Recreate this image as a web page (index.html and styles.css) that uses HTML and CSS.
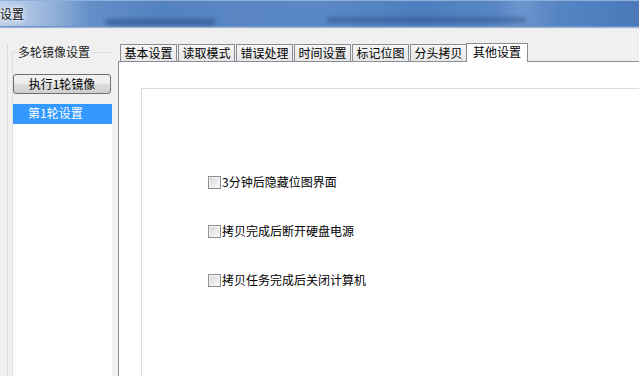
FILE: index.html
```html
<!DOCTYPE html>
<html lang="zh">
<head>
<meta charset="utf-8">
<title>设置</title>
<link rel="stylesheet" href="styles.css">
</head>
<body>
<div class="window">
  <div class="titlebar">
    <span class="title">设置</span>
    <span class="blur blur-a"></span>
    <span class="blur blur-b"></span>
  </div>
  <div class="main">
    <div class="left">
      <div class="group">
        <div class="legend">多轮镜像设置</div>
        <button class="btn">执行1轮镜像</button>
        <ul class="list">
          <li class="item selected">第1轮设置</li>
        </ul>
      </div>
    </div>
    <div class="tabs">
      <div class="tabstrip">
        <div class="tab">基本设置</div>
        <div class="tab">读取模式</div>
        <div class="tab">错误处理</div>
        <div class="tab">时间设置</div>
        <div class="tab">标记位图</div>
        <div class="tab">分头拷贝</div>
        <div class="tab active">其他设置</div>
      </div>
      <div class="page">
        <div class="panel">
          <label class="check"><span class="box"></span><span class="label">3分钟后隐藏位图界面</span></label>
          <label class="check"><span class="box"></span><span class="label">拷贝完成后断开硬盘电源</span></label>
          <label class="check"><span class="box"></span><span class="label">拷贝任务完成后关闭计算机</span></label>
        </div>
      </div>
    </div>
  </div>
</div>
</body>
</html>
```
FILE: styles.css
```css
* { box-sizing: border-box; }
html, body {
  margin: 0;
  padding: 0;
  width: 639px;
  height: 376px;
  overflow: hidden;
  background: #f0f0f0;
  font-family: "Noto Sans CJK SC", "Liberation Sans", sans-serif;
  font-size: 12px;
  color: #000;
}
.window {
  display: flex;
  flex-direction: column;
  height: 376px;
}
.titlebar {
  position: relative;
  height: 28px;
  flex: none;
  background:
    linear-gradient(90deg, rgba(255,255,255,0) 0px, rgba(255,255,255,0) 495px, rgba(255,255,255,0.10) 520px, rgba(255,255,255,0) 560px),
    linear-gradient(90deg, #bed0ea 0px, #a9c0e2 30px, #8aaad6 60px, #638fc8 90px, #5382c0 160px, #5a87c4 240px, #5a88c6 330px, #4e7ebd 420px, #5b89c7 520px, #4f7fbf 600px, #4a78b8 639px);
  border-top: 1px solid #8fb0dc;
  border-bottom: 1px solid #9fb8da;
  box-shadow: inset 0 -1px 0 #6d92c6;
  overflow: hidden;
}
.title {
  position: absolute;
  left: 0;
  top: 5px;
  font-size: 12px;
  line-height: 16px;
  color: #111;
  text-shadow: 0 0 4px #ffffff, 0 0 6px #ffffff;
}
.blur {
  position: absolute;
  height: 6px;
  background: #1f3f78;
  filter: blur(2px);
  opacity: 0.5;
  border-radius: 3px;
}
.blur-a { left: 105px; width: 110px; top: 18px; }
.blur-b { left: 326px; width: 200px; top: 16px; opacity: 0.4; }

.main {
  flex: 1;
  display: flex;
  padding-top: 15px;
  min-height: 0;
  border-top: 1px solid #e4e8ee;
}
.left {
  width: 105px;
  flex: none;
  overflow: hidden;
  border-left: 1px solid #d6d9de;
  margin-left: 7px;
  padding-left: 4px;
  margin-right: 6px;
}
.group {
  position: relative;
  margin-top: 8px;
  height: 400px;
  width: 120px;
  border: 1px solid #d5dfe5;
  border-right: none;
  border-bottom: none;
  padding-top: 21px;
}
.legend {
  position: absolute;
  top: -9px;
  left: 4px;
  padding: 0 1px;
  background: #f0f0f0;
  line-height: 16px;
  color: #222;
}
.btn {
  display: block;
  width: 98px;
  height: 20px;
  margin: 0;
  padding: 0;
  font: inherit;
  font-size: 12px;
  color: #000;
  border: 1px solid #707070;
  border-radius: 3px;
  background: linear-gradient(#f2f2f2 0%, #ebebeb 50%, #dddddd 51%, #cfcfcf 100%);
  line-height: 18px;
  text-align: center;
}
.list {
  list-style: none;
  margin: 10px 0 0 0;
  padding: 0;
  background: #fff;
  height: 300px;
  width: 100px;
}
.item {
  height: 20px;
  line-height: 18px;
  padding-left: 15px;
}
.item.selected {
  background: #3399ff;
  color: #fff;
}

.tabs {
  flex: 1;
  display: flex;
  flex-direction: column;
  min-width: 0;
}
.tabstrip {
  display: flex;
  align-items: flex-end;
  height: 17px;
  padding-left: 2px;
  gap: 1px;
  position: relative;
  z-index: 1;
}
.tab {
  width: 57px;
  height: 17px;
  border: 1px solid #898c95;
  border-bottom: none;
  background: linear-gradient(#f6f6f6, #e6e6e6);
  text-align: center;
  line-height: 15px;
  color: #000;
}
.tab.active {
  width: 62px;
  height: 19px;
  margin-left: -2px;
  margin-bottom: -1px;
  background: #fff;
  line-height: 16px;
}
.page {
  flex: 1;
  background: #fff;
  border-top: 1px solid #898c95;
  border-left: 1px solid #898c95;
  padding: 26px 0 0 22px;
  min-height: 0;
}
.panel {
  height: 100%;
  border-top: 1px solid #dcdcdc;
  border-left: 1px solid #dcdcdc;
  padding: 86px 0 0 66px;
  display: flex;
  flex-direction: column;
  gap: 35px;
}
.check {
  display: flex;
  align-items: center;
  height: 14px;
  gap: 1px;
}
.box {
  width: 13px;
  height: 13px;
  border: 1px solid #8f8f8f;
  background: linear-gradient(135deg, #d6d6d6 0%, #ececec 60%, #fafafa 100%);
  box-shadow: inset 0 0 0 1px #f4f4f4;
  flex: none;
}
.label {
  line-height: 14px;
  color: #000;
}
```
